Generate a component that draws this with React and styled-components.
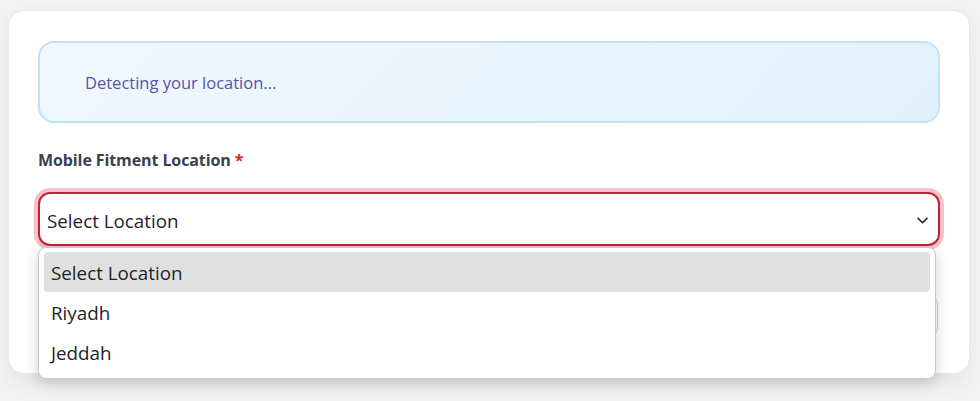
import React from "react";
import styled, { createGlobalStyle } from "styled-components";

const Global = createGlobalStyle`
  html, body { margin: 0; padding: 0; background: #f4f4f4; }
  body { font-family: "Segoe UI", "Open Sans", "Noto Sans", sans-serif; }
  * { box-sizing: border-box; }
`;

const Page = styled.div`
  padding: 10px 10px 0 8px;
  height: 401px;
  overflow: hidden;
`;

const Card = styled.div`
  background: #ffffff;
  border: 1px solid #e8e8e8;
  border-radius: 16px;
  box-shadow: 0 8px 24px rgba(0, 0, 0, 0.08);
  padding: 30px 29px 37px 29px;
  display: flex;
  flex-direction: column;
`;

const InfoBox = styled.div`
  height: 82px;
  border: 2px solid #bfe3f5;
  border-radius: 16px;
  background: linear-gradient(135deg, #f0f8ff 0%, #e1f1fc 100%);
  display: flex;
  align-items: center;
  padding-left: 45px;
  font-size: 16.5px;
  color: #5653a8;
`;

const Label = styled.label`
  margin-top: 27px;
  font-size: 16px;
  font-weight: 700;
  color: #374151;
  line-height: 20px;
  letter-spacing: -0.1px;
`;

const Required = styled.span`
  color: #dc2626;
`;

const Field = styled.div`
  position: relative;
  margin-top: 22px;
`;

const SelectBox = styled.div`
  height: 54px;
  border: 2px solid #c51f3a;
  border-radius: 12px;
  box-shadow: 0 0 0 4px rgba(230, 120, 135, 0.45);
  display: flex;
  align-items: center;
  justify-content: space-between;
  padding: 3px 10px 0 7px;
  font-size: 18.8px;
  color: #1f2328;
  background: #fff;
`;

const Chevron = styled.svg`
  width: 11px;
  height: 7px;
`;

const Dropdown = styled.ul`
  position: absolute;
  top: 55px;
  left: 0;
  width: 898px;
  margin: 0;
  padding: 4px 5px 6px;
  list-style: none;
  background: #fff;
  border: 1px solid #c8c8c8;
  border-radius: 8px;
  box-shadow: 0 4px 14px rgba(0, 0, 0, 0.18);
  z-index: 2;
`;

const Option = styled.li`
  height: 40px;
  display: flex;
  align-items: center;
  padding: 2px 0 0 7px;
  font-size: 18.8px;
  color: #1f2328;
  border-radius: 4px;
  background: ${(p) => (p.$active ? "#e0e0e0" : "transparent")};
`;

const NextInput = styled.div`
  margin-top: 50px;
  height: 40px;
  border: 1px solid #d1d5db;
  border-radius: 8px;
  background: #fff;
  margin-right: 2px;
`;

export default function App() {
  return (
    <>
      <Global />
      <Page>
        <Card>
          <InfoBox>Detecting your location...</InfoBox>
          <Label>
            Mobile Fitment Location <Required>*</Required>
          </Label>
          <Field>
            <SelectBox>
              <span>Select Location</span>
              <Chevron viewBox="0 0 11 7" fill="none">
                <path d="M1 1.2l4.5 4.5L10 1.2" stroke="#222" strokeWidth="1.6" strokeLinecap="round" strokeLinejoin="round" />
              </Chevron>
            </SelectBox>
            <Dropdown>
              <Option $active>Select Location</Option>
              <Option>Riyadh</Option>
              <Option>Jeddah</Option>
            </Dropdown>
          </Field>
          <NextInput />
        </Card>
      </Page>
    </>
  );
}
